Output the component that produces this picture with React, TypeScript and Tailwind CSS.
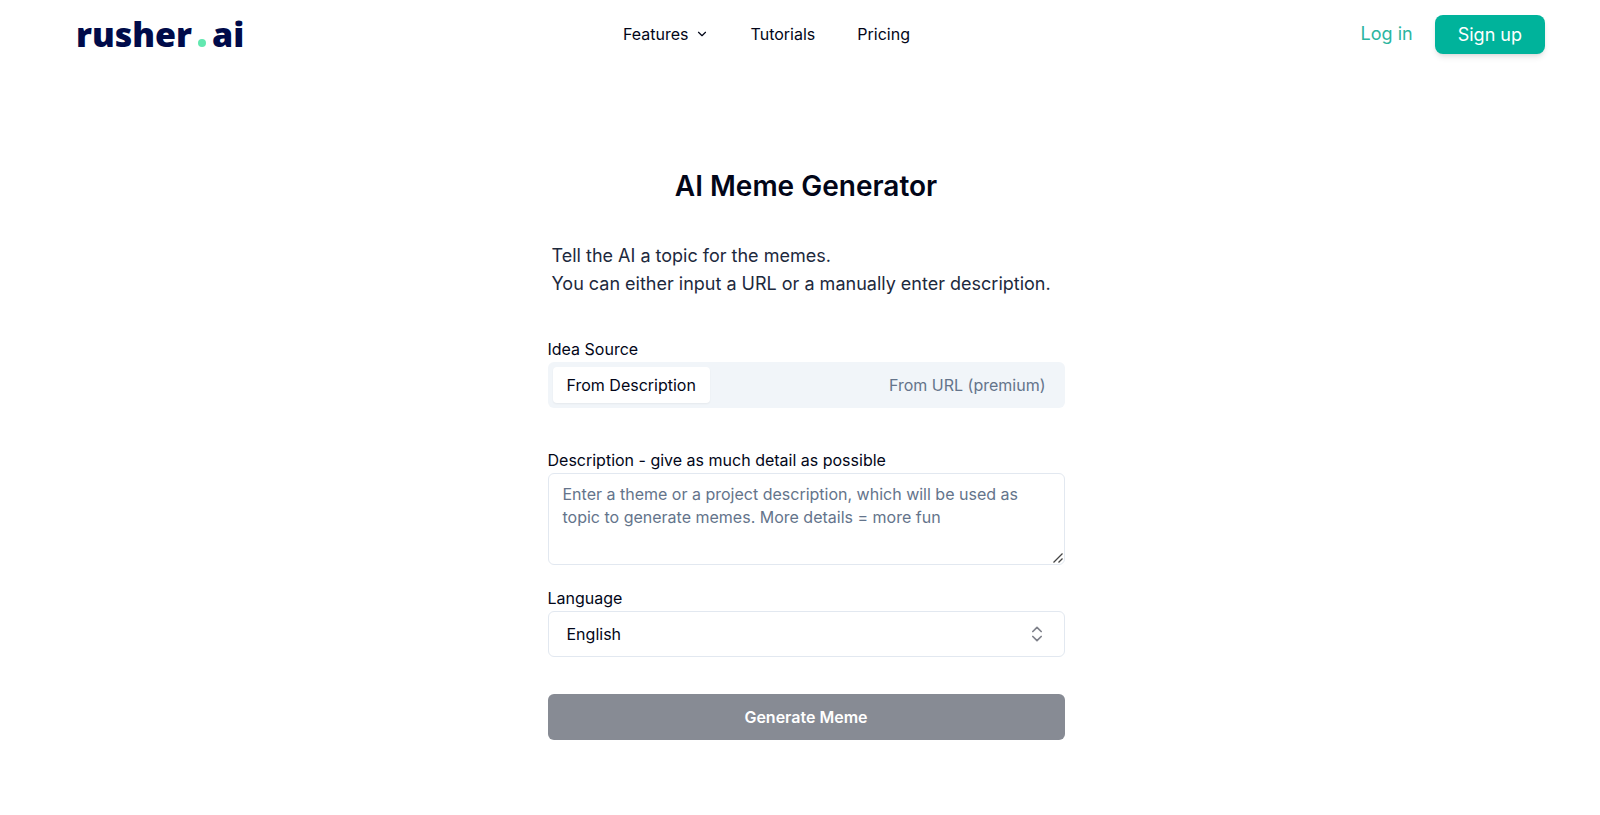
import React from "react";
import { ChevronDown, ChevronsUpDown } from "lucide-react";

const Logo = () => {
  return (
    <a
      href="#"
      aria-label="rusher.ai"
      className="flex items-baseline font-['Open_Sans',sans-serif] text-[34px] leading-10 font-extrabold text-[#000b4a]"
    >
      rusher
      <span className="mx-1.5 size-2 rounded-full bg-[#62e8b0]" />
      ai
    </a>
  );
};

const Header = () => {
  return (
    <header className="grid h-[68px] grid-cols-[1fr_auto_1fr] items-center pr-[55px] pl-[76px]">
      <div className="flex">
        <Logo />
      </div>
      <nav className="mr-[88px] flex items-center gap-[42px] text-base">
        <button className="flex items-center gap-1.5">
          Features
          <ChevronDown className="size-3.5" />
        </button>
        <a href="#">Tutorials</a>
        <a href="#">Pricing</a>
      </nav>
      <div className="flex items-center justify-end gap-[22px] text-lg">
        <a href="#" className="text-[#2bb5a0]">
          Log in
        </a>
        <a
          href="#"
          className="rounded-lg bg-[#00b39b] px-[23px] pt-1.5 pb-[5px] text-white shadow-md"
        >
          Sign up
        </a>
      </div>
    </header>
  );
};

const MemeForm = () => {
  return (
    <form className="mt-[39px] flex flex-col">
      <fieldset>
        <legend className="leading-[25px]">Idea Source</legend>
        <div className="flex h-[46px] items-center justify-between rounded-md bg-slate-100 p-[5px]">
          <button
            type="button"
            className="h-full rounded-sm bg-white px-3.5 shadow-xs"
          >
            From Description
          </button>
          <button type="button" className="h-full px-3.5 text-[#64748b]">
            From URL (premium)
          </button>
        </div>
      </fieldset>
      <label htmlFor="description" className="mt-10 leading-[25px]">
        Description - give as much detail as possible
      </label>
      <div className="relative flex">
        <textarea
          id="description"
          className="h-[92px] w-full resize-none rounded-md border border-slate-200 px-3.5 py-[9px] leading-[23px] placeholder:text-[#64748b]"
          placeholder="Enter a theme or a project description, which will be used as topic to generate memes. More details = more fun"
        />
        <svg
          viewBox="0 0 10 10"
          fill="none"
          stroke="#444"
          strokeWidth="1.3"
          className="pointer-events-none absolute right-0.5 bottom-0.5 size-2.5"
        >
          <path d="M0.5 9.5l9-9" />
          <path d="M5.5 9.5l4-4" />
        </svg>
      </div>
      <label htmlFor="language" className="mt-[21px] leading-[25px]">
        Language
      </label>
      <div className="relative">
        <select
          id="language"
          className="h-[46px] w-full appearance-none rounded-md border border-slate-200 bg-white px-[18px]"
        >
          <option>English</option>
        </select>
        <ChevronsUpDown className="pointer-events-none absolute inset-y-0 right-[18px] my-auto size-5 opacity-50" />
      </div>
      <button
        type="submit"
        disabled
        className="mt-[37px] h-[46px] rounded-md bg-[#878b94] font-semibold text-white"
      >
        Generate Meme
      </button>
    </form>
  );
};

const App = () => {
  return (
    <div className="min-h-screen bg-white font-[Inter,sans-serif] text-slate-950">
      <Header />
      <main className="flex justify-center pt-[98px] pl-3">
        <div className="w-full max-w-[517px]">
          <h1 className="text-center text-[28px] leading-10 font-semibold">
            AI Meme Generator
          </h1>
          <p className="mt-9 px-1 text-lg leading-7 text-slate-800">
            Tell the AI a topic for the memes.
            <br />
            You can either input a URL or a manually enter description.
          </p>
          <MemeForm />
        </div>
      </main>
    </div>
  );
};

export default App;
